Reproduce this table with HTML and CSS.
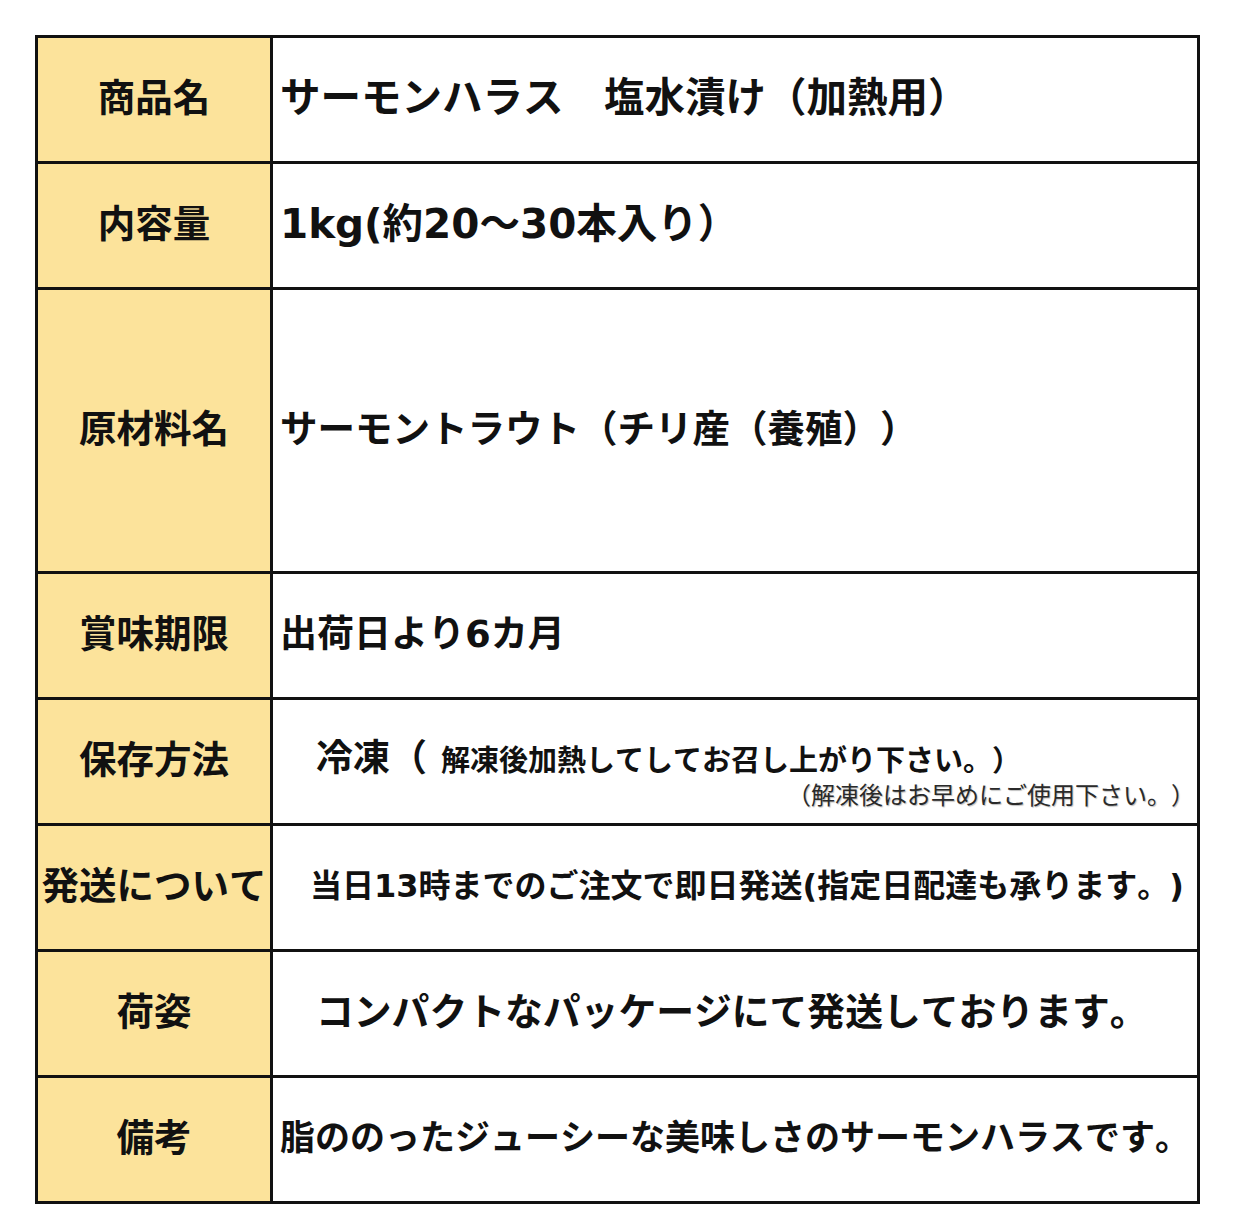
FILE: index.html
```html
<!DOCTYPE html>
<html lang="ja">
<head>
<meta charset="utf-8">
<link rel="stylesheet" href="styles.css">
</head>
<body>
<div class="sheet">
  <div class="label">商品名</div>
  <div class="value v40">サーモンハラス　塩水漬け（加熱用）</div>

  <div class="label">内容量</div>
  <div class="value v40">1kg(約20～30本入り）</div>

  <div class="label">原材料名</div>
  <div class="value v375">サーモントラウト（チリ産（養殖））</div>

  <div class="label">賞味期限</div>
  <div class="value v37">出荷日より6カ月</div>

  <div class="label">保存方法</div>
  <div class="value storage">
    <div class="line1"><span class="big">冷凍（</span><span class="mid">解凍後加熱してしてお召し上がり下さい。）</span></div>
    <div class="line2">（解凍後はお早めにご使用下さい。）</div>
  </div>

  <div class="label">発送について</div>
  <div class="value v32 indent30">当日13時までのご注文で即日発送(指定日配達も承ります。)</div>

  <div class="label">荷姿</div>
  <div class="value v38 indent36">コンパクトなパッケージにて発送しております。</div>

  <div class="label">備考</div>
  <div class="value v35">脂ののったジューシーな美味しさのサーモンハラスです。</div>
</div>
</body>
</html>
```

FILE: styles.css
```css
html, body {
  margin: 0;
  padding: 0;
  background: #ffffff;
}

body {
  font-family: "DejaVu Sans", "Noto Sans CJK JP", sans-serif;
  color: #111;
  text-spacing-trim: space-all;
  font-kerning: none;
}

.sheet {
  margin: 35px 0 0 35px;
  width: 1165px;
  box-sizing: border-box;
  display: grid;
  grid-template-columns: 232px 924px;
  grid-template-rows: 123px 123px 281px 123px 123px 123px 123px 123px;
  gap: 3px;
  padding: 3px;
  background: #111;
}

.label {
  background: #fce39b;
  display: flex;
  align-items: center;
  justify-content: center;
  font-size: 37.5px;
  font-weight: 700;
  padding-bottom: 10px;
  box-sizing: border-box;
  white-space: nowrap;
}

.value {
  background: #ffffff;
  display: flex;
  align-items: center;
  padding-left: 7px;
  padding-bottom: 10px;
  box-sizing: border-box;
  font-weight: 700;
  white-space: nowrap;
}

.v40 { font-size: 40.5px; }
.v38 { font-size: 37.8px; }
.v375 { font-size: 37.5px; }
.v37 { font-size: 37px; }
.v35 { font-size: 35px; }
.v32 { font-size: 32px; }

.indent30 { padding-left: 37px; }
.indent36 { padding-left: 43px; }

.storage {
  flex-direction: column;
  align-items: stretch;
  justify-content: flex-start;
  padding: 37px 2px 0 43px;
}

.line1 {
  display: flex;
  align-items: baseline;
  line-height: 44px;
  height: 44px;
}

.big {
  font-size: 37px;
}

.mid {
  font-size: 29px;
  margin-left: 14px;
}

.line2 {
  margin-top: 0;
  text-align: right;
  font-size: 24px;
  font-weight: 400;
  line-height: 30px;
  color: #2a2a2a;
  text-shadow: 1px 1px 1px rgba(0, 0, 0, 0.25);
}
```
